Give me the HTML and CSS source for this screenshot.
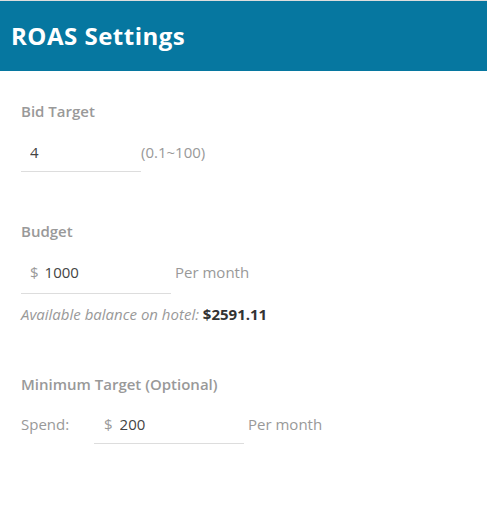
FILE: index.html
```html
<!DOCTYPE html>
<html lang="en">
<head>
<meta charset="utf-8">
<title>ROAS Settings</title>
<link rel="stylesheet" href="styles.css">
</head>
<body>
<header class="header">
  <h1 class="title">ROAS Settings</h1>
</header>
<main class="content">
  <section class="section section-bid">
    <div class="field-label">Bid Target</div>
    <div class="row">
      <div class="field field-bid">
        <input class="field-input" type="text" value="4">
      </div>
      <span class="hint hint-range">(0.1~100)</span>
    </div>
  </section>

  <section class="section section-budget">
    <div class="field-label">Budget</div>
    <div class="row">
      <div class="field field-money field-budget">
        <span class="currency">$</span>
        <input class="field-input" type="text" value="1000">
      </div>
      <span class="hint hint-unit">Per month</span>
    </div>
    <p class="balance"><em>Available balance on hotel:</em> <strong>$2591.11</strong></p>
  </section>

  <section class="section section-min">
    <div class="field-label">Minimum Target (Optional)</div>
    <div class="row">
      <span class="row-label">Spend:</span>
      <div class="field field-money field-spend">
        <span class="currency">$</span>
        <input class="field-input" type="text" value="200">
      </div>
      <span class="hint hint-unit">Per month</span>
    </div>
  </section>
</main>
</body>
</html>
```

FILE: styles.css
```css
* {
  box-sizing: border-box;
}

html, body {
  margin: 0;
  padding: 0;
  background: #ffffff;
}

body {
  font-family: "Open Sans", "Liberation Sans", sans-serif;
  font-size: 15px;
  line-height: 20px;
  color: #333333;
}

.header {
  border-top: 1px solid #dddddd;
  height: 71px;
  background: #0677a0;
  display: flex;
  align-items: center;
  padding-left: 11px;
}

.title {
  margin: 0;
  font-size: 24px;
  font-weight: 700;
  letter-spacing: 0.5px;
  color: #ffffff;
  line-height: 32px;
}

.content {
  padding-left: 21px;
  padding-top: 30px;
}

.section-budget {
  margin-top: 49px;
}

.section-min {
  margin-top: 50px;
}

.field-label {
  font-weight: 600;
  color: #999999;
  line-height: 20px;
}

.row {
  display: flex;
  align-items: flex-start;
}

.section-bid .row {
  margin-top: 15px;
}

.section-budget .row {
  margin-top: 15px;
}

.section-min .row {
  margin-top: 14px;
}

.field {
  display: flex;
  align-items: center;
  border-bottom: 1px solid #dddddd;
  padding: 6px 0 9px 9px;
}

.field-bid {
  width: 120px;
}

.field-budget {
  width: 150px;
  padding-bottom: 11px;
}

.field-spend {
  width: 150px;
  padding-left: 10px;
  padding-bottom: 9px;
}

.currency {
  color: #999999;
  margin-right: 6px;
  line-height: 20px;
}

.field-spend .currency {
  margin-right: 7px;
}

.field-input {
  border: none;
  outline: none;
  padding: 0;
  margin: 0;
  background: transparent;
  font-family: inherit;
  font-size: 15px;
  line-height: 20px;
  height: 20px;
  color: #444444;
  width: 100%;
  min-width: 0;
  flex: 1;
}

.hint {
  color: #999999;
  line-height: 20px;
  padding-top: 6px;
}

.hint-range {
  margin-left: 0;
}

.hint-unit {
  margin-left: 4px;
}

.row-label {
  color: #999999;
  width: 73px;
  padding-top: 6px;
  line-height: 20px;
}

.balance {
  margin: 10px 0 0;
  color: #999999;
}

.balance em {
  font-style: italic;
}

.balance strong {
  font-weight: 700;
  color: #333333;
}
```
